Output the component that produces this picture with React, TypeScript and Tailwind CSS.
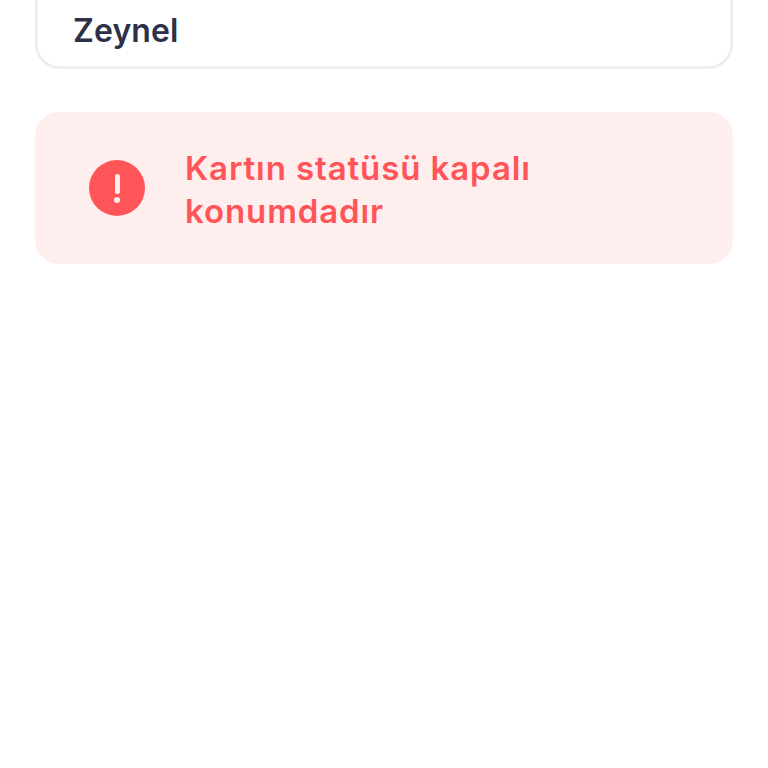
import React from 'react';

const font = { fontFamily: '"Inter", "Noto Sans", sans-serif' };

export default function App() {
  return (
    <div className="w-full h-[768px] bg-white overflow-hidden px-[35px]" style={font}>
      <div className="h-[89px] -mt-[20px] border-[3px] border-[#eeeeee] rounded-[24px] bg-white px-[35px] pt-[28px] flex flex-col">
        <div className="text-[32px] leading-[40px] font-semibold text-[#2e3049] tracking-[0.1px]">Zeynel</div>
      </div>
      <div className="mt-[43px] h-[152px] rounded-[24px] bg-[#ffeeee] flex items-center pl-[54px] pr-[40px] gap-[40px]">
        <div className="w-[56px] h-[56px] rounded-full bg-[#ff5558] flex flex-col items-center justify-center shrink-0">
          <div className="w-[5px] h-[20px] rounded-full bg-[#ffeeee]" />
          <div className="w-[6px] h-[6px] rounded-full bg-[#ffeeee] mt-[3px]" />
        </div>
        <div className="pt-[3px] text-[33px] leading-[43px] font-semibold text-[#ff5558] w-[420px] tracking-[0.9px]">Kartın statüsü kapalı konumdadır</div>
      </div>
    </div>
  );
}
